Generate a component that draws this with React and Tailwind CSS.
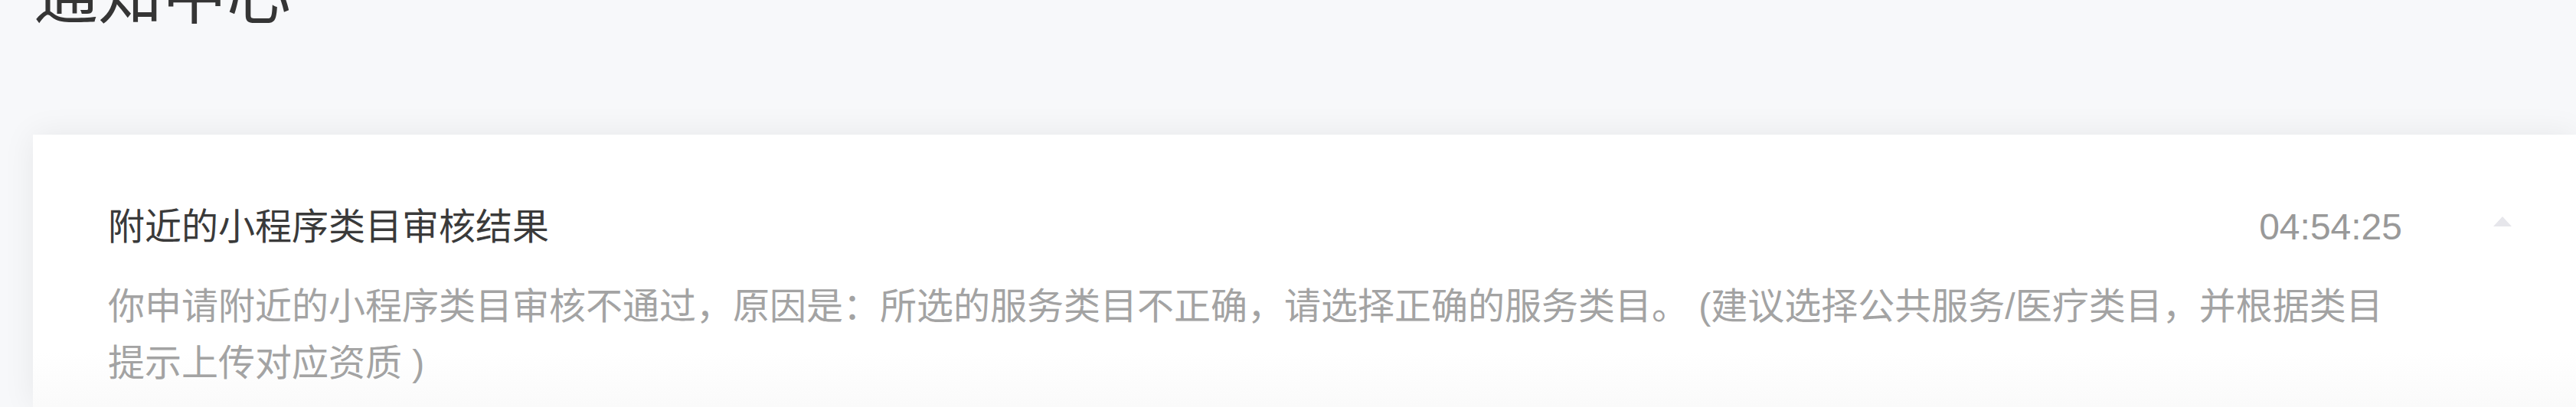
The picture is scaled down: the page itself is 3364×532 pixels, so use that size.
export default function App() {
  return (
    <div
      className="w-[3364px] h-[532px] overflow-hidden bg-[#f7f8fa] flex flex-col pl-[43px]"
      style={{ fontFamily: '"Liberation Sans", "Noto Sans CJK SC", sans-serif' }}
    >
      <h1 className="text-[84px] leading-[84px] text-[#353535] font-normal mt-[-47px] pl-[1px]">
        通知中心
      </h1>
      <div className="mt-[139px] flex-1 bg-white shadow-[0_0_40px_rgba(0,0,0,0.07)] flex flex-row bg-gradient-to-b from-white from-[80%] to-[#fafafa]">
        <div className="flex-1 pl-[98px] pt-[84px] flex flex-col">
          <div className="flex flex-row items-center justify-between">
            <div className="text-[48px] leading-[74px] text-[#3a3a3a]">
              附近的小程序类目审核结果
            </div>
            <div className="text-[48px] leading-[74px] text-[#999999]">04:54:25</div>
          </div>
          <div className="mt-[30px] text-[48px] leading-[74px] text-[#a3a3a3]">
            你申请附近的小程序类目审核不通过，原因是：所选的服务类目不正确，请选择正确的服务类目。 (建议选择公共服务/医疗类目，并根据类目提示上传对应资质 )
          </div>
        </div>
        <div className="w-[227px] flex flex-row justify-end pr-[84px] pt-[107px]">
          <svg width="24" height="13" viewBox="0 0 24 13">
            <polygon points="12,0 24,13 0,13" fill="#e6e6eb" />
          </svg>
        </div>
      </div>
    </div>
  );
}
